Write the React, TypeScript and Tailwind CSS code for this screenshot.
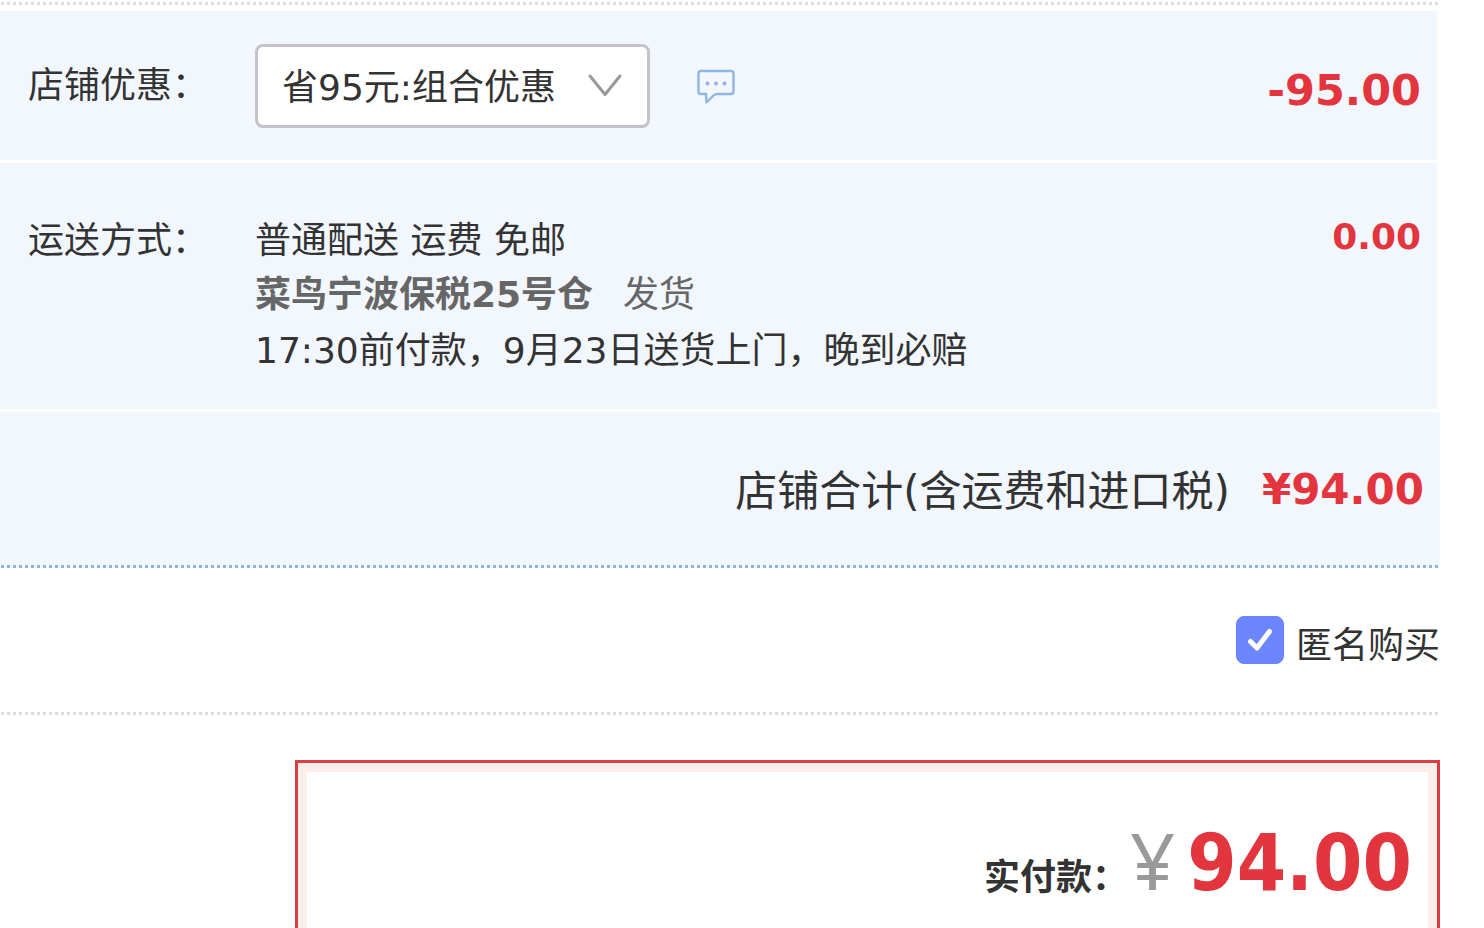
import React, { useState } from 'react';

type DotTone = 'gray' | 'blue';

interface InfoRowProps {
  label: React.ReactNode;
  amount: string;
  amountClassName: string;
  className: string;
  children: React.ReactNode;
}

const DOT_TONES: Record<DotTone, string> = {
  gray: 'bg-[repeating-linear-gradient(90deg,transparent_0_1px,#dcdcdf_1px_4px,transparent_4px_6px)]',
  blue: 'bg-[repeating-linear-gradient(90deg,#f2f7ff_0_1px,#8fb2e0_1px_4px,#f2f7ff_4px_6px)]',
};

const PROMOTIONS = ['省95元:组合优惠'];

const DottedLine: React.FC<{ tone: DotTone }> = ({ tone }) => (
  <div className={`h-[3px] ${DOT_TONES[tone]}`} />
);

const InfoRow: React.FC<InfoRowProps> = ({ label, amount, amountClassName, className, children }) => (
  <div className={`mr-[3px] mb-[3px] flex items-start bg-[#f2f7fe] pl-7 pr-4 ${className}`}>
    {label}
    <div className="flex-1">{children}</div>
    <span className={`font-bold text-[#e2353e] ${amountClassName}`}>{amount}</span>
  </div>
);

const MessageIcon = () => (
  <svg className="h-9 w-10" viewBox="0 0 40 36" fill="none" stroke="#8db7e6" strokeWidth="2.4" strokeLinejoin="round">
    <path d="M5 3H35Q37.500 3 37.500 5.500V23.500Q37.500 26 35 26H21.500Q19 26 17.500 27.500L10.500 34.500L10 26H5Q2.500 26 2.500 23.500V5.500Q2.500 3 5 3Z" />
    <g fill="#8fb2e0" stroke="none">
      <circle cx="11.500" cy="15.500" r="1.900" />
      <circle cx="20" cy="15.500" r="1.900" />
      <circle cx="28.500" cy="15.500" r="1.900" />
    </g>
  </svg>
);

export default function App() {
  const [promotion, setPromotion] = useState(PROMOTIONS[0]);
  const [anonymous, setAnonymous] = useState(true);

  return (
    <main className="flex min-h-screen flex-col bg-white pt-0.5 pr-11 font-['DejaVu_Sans','Noto_Sans_CJK_SC',sans-serif] text-4xl text-[#333]">
      <DottedLine tone="gray" />

      <section className="mt-1.5">
        <InfoRow
          label={<label htmlFor="promotion" className="mt-[18px] w-[227px] leading-[48px]">店铺优惠：</label>}
          amount="-95.00"
          amountClassName="mt-5 text-[43px] leading-[52px]"
          className="h-[149px] pt-[33px]"
        >
          <div className="flex items-center">
            <div className="relative w-[395px]">
              <select
                id="promotion"
                value={promotion}
                onChange={(e) => setPromotion(e.target.value)}
                className="block h-[84px] w-full appearance-none rounded-lg border-3 border-[#c3c3cc] bg-white pt-1 pl-6 pr-16"
              >
                {PROMOTIONS.map((p) => (
                  <option key={p} value={p}>{p}</option>
                ))}
              </select>
              <svg className="pointer-events-none absolute top-7 right-6 h-7 w-10" viewBox="0 0 40 28" fill="none" stroke="#999" strokeWidth="3" strokeLinecap="round" strokeLinejoin="round">
                <path d="M4 4L19 22.500L34 4" />
              </svg>
            </div>
            <button type="button" aria-label="留言" className="ml-[46px]">
              <MessageIcon />
            </button>
          </div>
        </InfoRow>

        <InfoRow
          label={<span className="w-[227px] leading-[48px]">运送方式：</span>}
          amount="0.00"
          amountClassName="leading-[40px]"
          className="h-[246px] pt-[54px]"
        >
          <p className="leading-[48px]">普通配送 运费 免邮</p>
          <p className="mt-1.5 leading-[48px] text-[#666]">
            <strong>菜鸟宁波保税25号仓</strong>
            <span className="ml-[30px]">发货</span>
          </p>
          <p className="mt-2 leading-[48px]">17:30前付款，9月23日送货上门，晚到必赔</p>
        </InfoRow>

        <div className="flex h-[153px] items-center justify-end bg-[#f2f7fe] pr-4">
          <span className="pt-2 text-[42px]">店铺合计(含运费和进口税)</span>
          <strong className="ml-8 pt-1 text-[42px] text-[#e2353e]">¥94.00</strong>
        </div>
        <DottedLine tone="blue" />
      </section>

      <div className="flex h-36 items-center justify-end">
        <span className="relative mr-3 size-12">
          <input
            type="checkbox"
            id="anonymous"
            checked={anonymous}
            onChange={(e) => setAnonymous(e.target.checked)}
            className="block size-12 appearance-none rounded-lg border border-[#6b85fb] checked:bg-[#6b85fb]"
          />
          {anonymous && (
            <svg className="pointer-events-none absolute inset-0" viewBox="0 0 48 48" fill="none" stroke="#fff" strokeWidth="5" strokeLinecap="round" strokeLinejoin="round">
              <path d="M14.500 25.500L21 32L33.500 15.500" />
            </svg>
          )}
        </span>
        <label htmlFor="anonymous" className="pt-3">匿名购买</label>
      </div>
      <DottedLine tone="gray" />

      <section className="mt-[45px] ml-[295px] flex flex-1 flex-col border-3 border-b-0 border-[#dc3c42]">
        <div className="flex flex-1 items-baseline justify-end border-9 border-b-0 border-[#fceee8] pt-[34px] pr-4">
          <strong>实付款：</strong>
          <span className="ml-0.5 font-['Noto_Sans'] text-[79px] leading-[108px] text-[#999]">¥</span>
          <strong className="ml-3 font-['DejaVu_Sans_Condensed','DejaVu_Sans'] text-[79px] leading-[96px] text-[#e2353e]">94.00</strong>
        </div>
      </section>
    </main>
  );
}
